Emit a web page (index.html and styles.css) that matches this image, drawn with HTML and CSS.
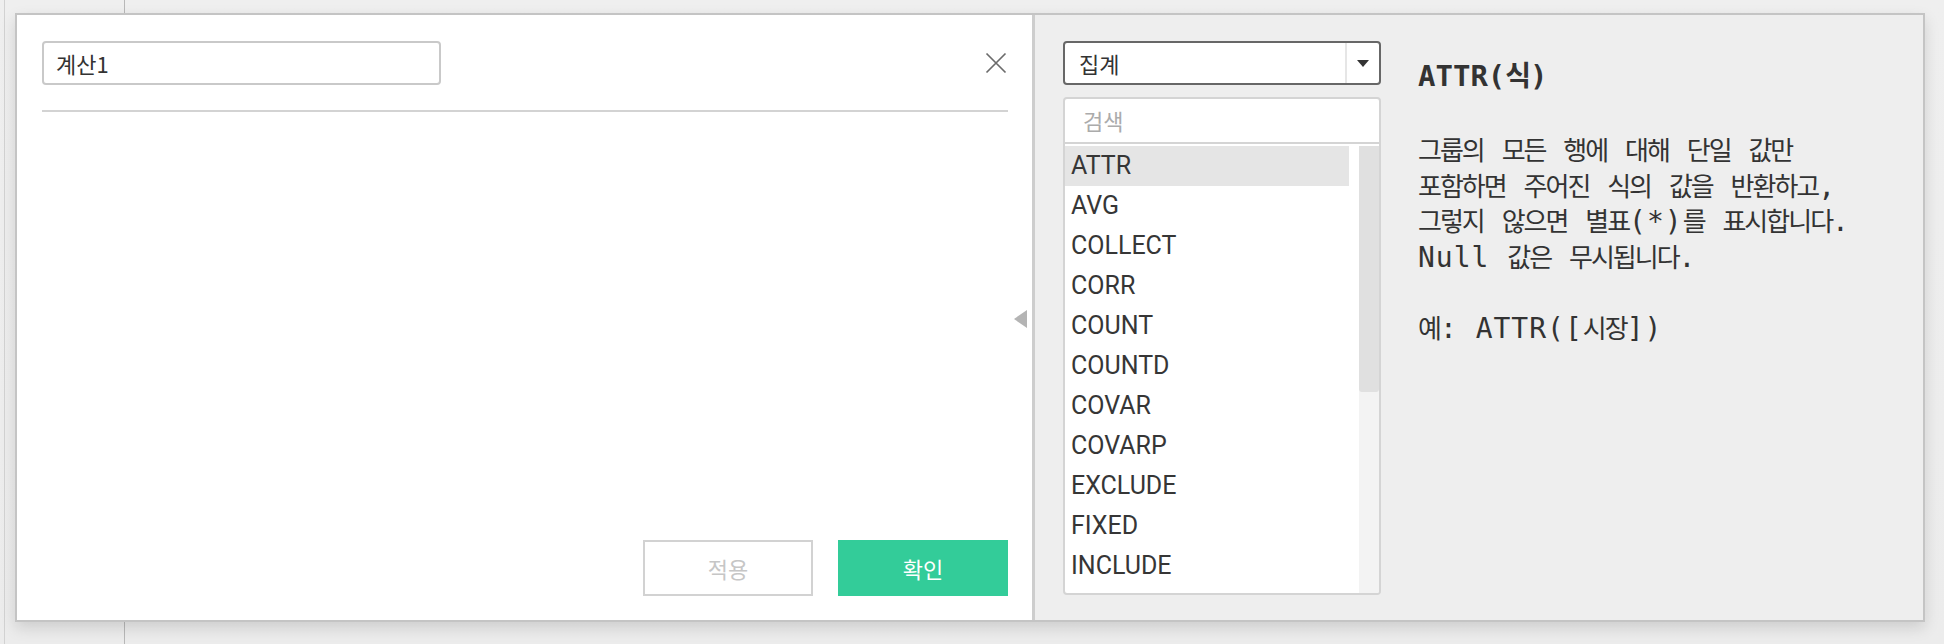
FILE: index.html
```html
<!DOCTYPE html>
<html lang="ko">
<head>
<meta charset="utf-8">
<title>계산1</title>
<link rel="stylesheet" href="styles.css">
</head>
<body>
<div class="stage">
  <div class="dialog">
    <section class="editor">
      <div class="editor-head">
        <div class="name-input">계산1</div>
        <button class="close" aria-label="닫기">
          <svg viewBox="0 0 24 24" width="24" height="24"><path d="M2.5 2.5 L21.5 21.5 M21.5 2.5 L2.5 21.5" stroke="#6b6b6b" stroke-width="1.7" fill="none"/></svg>
        </button>
      </div>
      <div class="editor-rule"></div>
      <div class="editor-body"></div>
      <div class="editor-foot">
        <button class="btn btn-apply">적용</button>
        <button class="btn btn-ok">확인</button>
      </div>
      <span class="collapse"></span>
    </section>
    <section class="functions">
      <div class="fn-col">
        <div class="select">
          <span class="select-label">집계</span>
          <span class="select-arrow"></span>
        </div>
        <div class="fn-box">
          <div class="fn-search">검색</div>
          <div class="fn-list">
            <ul class="fn-items">
              <li class="active">ATTR</li>
              <li>AVG</li>
              <li>COLLECT</li>
              <li>CORR</li>
              <li>COUNT</li>
              <li>COUNTD</li>
              <li>COVAR</li>
              <li>COVARP</li>
              <li>EXCLUDE</li>
              <li>FIXED</li>
              <li>INCLUDE</li>
            </ul>
            <div class="scroll"><div class="thumb"></div></div>
          </div>
        </div>
      </div>
      <div class="fn-help">
        <div class="help-title">ATTR(<span class="ko">식</span>)</div>
        <div class="help-body">
          <div><span class="ko">그룹의</span> <span class="ko">모든</span> <span class="ko">행에</span> <span class="ko">대해</span> <span class="ko">단일</span> <span class="ko">값만</span></div>
          <div><span class="ko">포함하면</span> <span class="ko">주어진</span> <span class="ko">식의</span> <span class="ko">값을</span> <span class="ko">반환하고</span>,</div>
          <div><span class="ko">그렇지</span> <span class="ko">않으면</span> <span class="ko">별표</span>(*)<span class="ko">를</span> <span class="ko">표시합니다</span>.</div>
          <div>Null <span class="ko">값은</span> <span class="ko">무시됩니다</span>.</div>
          <div class="help-example"><span class="ko">예</span>: ATTR([<span class="ko">시장</span>])</div>
        </div>
      </div>
    </section>
  </div>
</div>
</body>
</html>
```
FILE: styles.css
```css
html, body {
  margin: 0;
  padding: 0;
}

body {
  width: 1944px;
  height: 644px;
  overflow: hidden;
  font-family: "Noto Sans CJK KR", "Noto Sans", sans-serif;
  color: #333;
  background:
    linear-gradient(to right,
      transparent 4px, #d2d2d2 4px, #d2d2d2 5px, transparent 5px,
      transparent 124px, #b8b8b8 124px, #b8b8b8 125px, transparent 125px),
    linear-gradient(to bottom, #efefef, #ececec);
}

.stage {
  padding: 13px 0 0 15px;
}

.dialog {
  position: relative;
  width: 1906px;
  height: 605px;
  border: 2px solid #c4c4c4;
  display: flex;
  background: #fff;
  box-shadow: 0 6px 14px rgba(0, 0, 0, 0.13);
}

/* ---------- left: editor ---------- */
.editor {
  position: relative;
  flex: 0 0 1015px;
  box-sizing: border-box;
  padding: 26px 24px 24px 25px;
  display: flex;
  flex-direction: column;
  background: #fff;
}

.editor-head {
  display: flex;
  align-items: center;
  justify-content: space-between;
  height: 44px;
}

.name-input {
  box-sizing: border-box;
  width: 399px;
  height: 44px;
  border: 2px solid #c9c9c9;
  border-radius: 4px;
  padding: 0 12px;
  font-size: 22px;
  line-height: 40px;
  color: #333;
}

.close {
  background: none;
  border: none;
  padding: 0;
  margin: 0;
  width: 24px;
  height: 24px;
  display: block;
}

.close svg {
  display: block;
}

.editor-rule {
  height: 2px;
  background: #d3d3d3;
  margin-top: 25px;
}

.editor-body {
  flex: 1;
}

.editor-foot {
  display: flex;
  justify-content: flex-end;
  gap: 25px;
}

.btn {
  box-sizing: border-box;
  width: 170px;
  height: 56px;
  margin: 0;
  padding: 0;
  font-family: "Noto Sans CJK KR", sans-serif;
  font-size: 22px;
  cursor: pointer;
}

.btn-apply {
  background: #fff;
  border: 2px solid #d2d2d2;
  color: #c6c6c6;
}

.btn-ok {
  background: #33cc99;
  border: none;
  color: #fff;
}

.collapse {
  position: absolute;
  right: 5px;
  top: 295px;
  width: 0;
  height: 0;
  border-top: 9px solid transparent;
  border-bottom: 9px solid transparent;
  border-right: 13px solid #b4b4b4;
}

/* ---------- right: functions ---------- */
.functions {
  flex: 1;
  display: flex;
  gap: 37px;
  padding: 26px 0 0 28px;
  background: #eeeeee;
  border-left: 3px solid #cdcdcd;
}

.fn-col {
  width: 318px;
  display: flex;
  flex-direction: column;
}

.select {
  box-sizing: border-box;
  height: 44px;
  border: 2px solid #676767;
  border-radius: 4px;
  background: #fff;
  display: flex;
}

.select-label {
  flex: 1;
  padding-left: 14px;
  font-size: 22px;
  line-height: 40px;
  color: #333;
}

.select-arrow {
  width: 32px;
  border-left: 2px solid #e6e6e6;
  display: flex;
  align-items: center;
  justify-content: center;
}

.select-arrow::after {
  content: "";
  width: 0;
  height: 0;
  border-left: 6.5px solid transparent;
  border-right: 6.5px solid transparent;
  border-top: 7px solid #333;
}

.fn-box {
  margin-top: 12px;
  box-sizing: border-box;
  height: 498px;
  border: 2px solid #d4d4d4;
  border-radius: 4px;
  background: #fff;
  display: flex;
  flex-direction: column;
  overflow: hidden;
}

.fn-search {
  box-sizing: border-box;
  height: 45px;
  border-bottom: 2px solid #d4d4d4;
  padding-left: 18px;
  font-size: 22px;
  line-height: 43px;
  color: #ababab;
}

.fn-list {
  flex: 1;
  min-height: 0;
  display: flex;
  gap: 10px;
  padding-top: 2px;
}

.fn-items {
  list-style: none;
  margin: 0;
  padding: 0;
  width: 284px;
}

.fn-items li {
  height: 40px;
  line-height: 40px;
  padding-left: 6px;
  font-family: Roboto, "Liberation Sans", sans-serif;
  font-size: 25px;
  color: #363636;
}

.fn-items li.active {
  background: #e5e5e5;
}

.scroll {
  width: 20px;
  background: #f3f3f3;
}

.thumb {
  height: 246px;
  background: #e0e0e0;
  border-radius: 0 0 3px 3px;
}

.fn-help {
  padding-top: 17px;
  font-family: "DejaVu Sans Mono", "Liberation Mono", monospace;
  font-size: 28px;
  letter-spacing: 1px;
  line-height: 36px;
  color: #333;
  white-space: nowrap;
}

.help-title {
  font-size: 29px;
  letter-spacing: 0;
  font-weight: bold;
}

.help-body {
  margin-top: 39px;
  line-height: 35.5px;
}

.help-example {
  margin-top: 35.5px;
}

.ko {
  font-family: "Noto Sans CJK KR", sans-serif;
  font-size: 26px;
  letter-spacing: -2px;
  line-height: 32px;
}

.help-title .ko {
  font-size: 28px;
  letter-spacing: -1px;
  line-height: 30px;
}
```
